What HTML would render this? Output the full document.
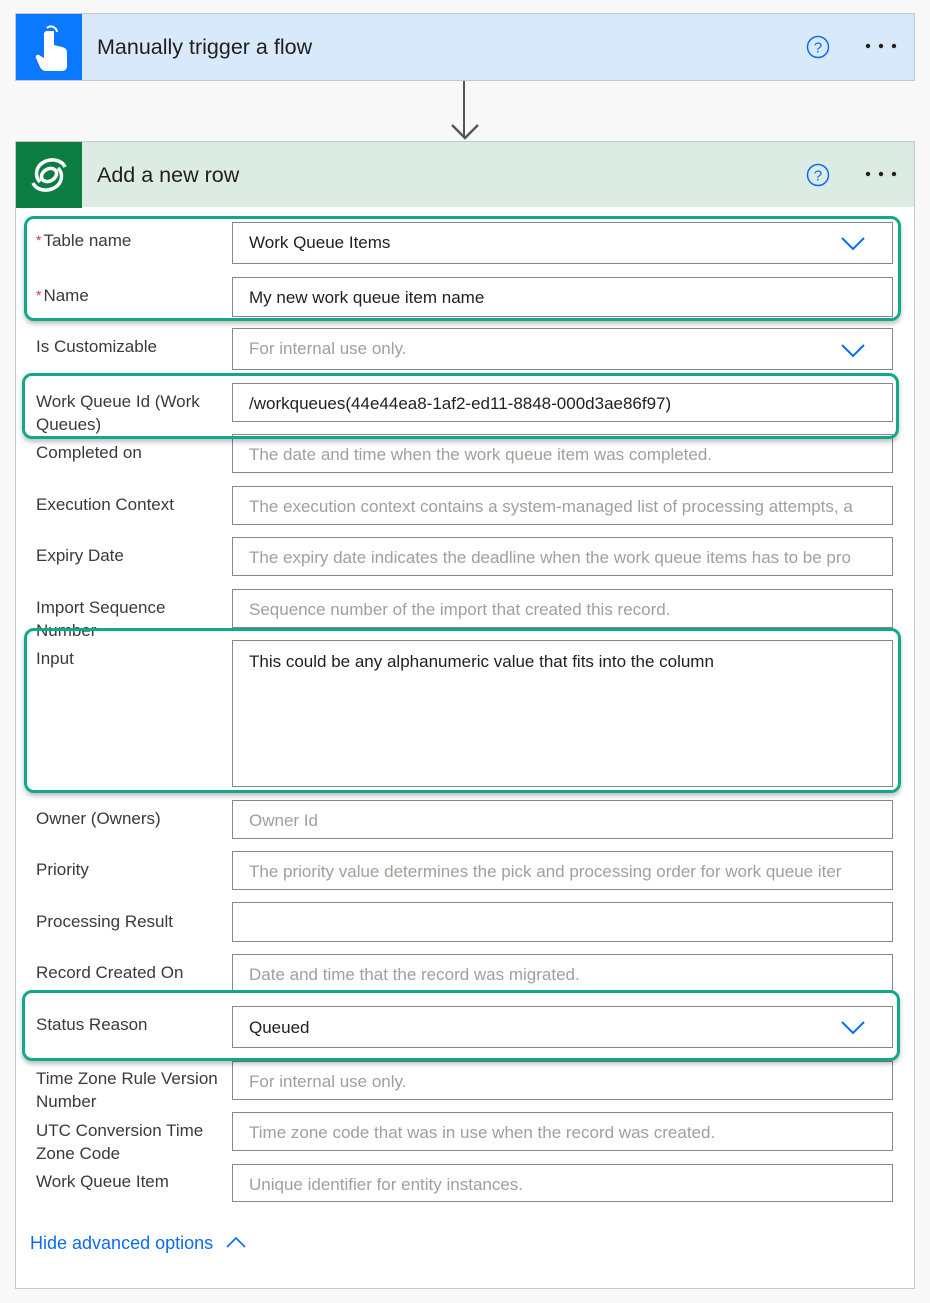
<!DOCTYPE html>
<html><head><meta charset="utf-8"><style>
body{margin:0;width:930px;height:1303px;background:#f8f8f8;font-family:"Liberation Sans",sans-serif;position:relative;overflow:hidden}
.a{position:absolute}
.card{position:absolute;border:1px solid #c8c8c8;box-sizing:border-box}
.lbl{position:absolute;left:36px;width:190px;font-size:17px;line-height:23px;color:#3b3a39}
.inp{position:absolute;left:232px;width:661px;border:1px solid #8a8886;box-sizing:border-box;background:#fff;font-size:17px;color:#201f1e;padding-left:16px;white-space:nowrap;overflow:hidden}
.ph{color:#a19f9d}
.hl{position:absolute;border:3px solid #12a98a;border-radius:10px;box-shadow:0 3px 5px rgba(0,0,0,.25);box-sizing:border-box}
.req{color:#d13438;font-size:14px;vertical-align:top;margin-right:2px}
</style></head><body>
<div class="card" style="left:15px;top:13px;width:900px;height:68px;background:#d9e9fc"></div>
<div class="a" style="left:16px;top:14px;width:66px;height:66px;background:#0a78ff">
<svg width="66" height="66" viewBox="0 0 66 66"><path d="M31 14a6 6 0 0 1 10 4" fill="none" stroke="#fff" stroke-width="2"/><path d="M33 17h5v14l8 2c4 1 5 3 5 6v13c0 3-2 5-5 5H30c-3 0-5-2-6-4l-4-9c-1-2 1-4 3-3l5 3V20c0-2 2-3 3-3z" fill="#fff"/></svg></div>
<div class="a" style="left:97px;top:35px;font-size:21.5px;color:#201f1e">Manually trigger a flow</div>
<svg class="a" style="left:806px;top:35px" width="24" height="24"><circle cx="12" cy="12" r="10.5" fill="none" stroke="#0a6cf5" stroke-width="1.5"/><text x="12" y="17.5" text-anchor="middle" font-size="15" fill="#0a6cf5" font-family="Liberation Sans">?</text></svg>
<svg class="a" style="left:864px;top:41px" width="34" height="10"><circle cx="4" cy="5" r="2.2" fill="#201f1e"/><circle cx="17" cy="5" r="2.2" fill="#201f1e"/><circle cx="30" cy="5" r="2.2" fill="#201f1e"/></svg>
<div class="a" style="left:463px;top:81px;width:2px;height:56px;background:#555"></div>
<svg class="a" style="left:449px;top:112px" width="32" height="30"><path d="M3 13l13 13 13-13" fill="none" stroke="#555" stroke-width="2.4"/></svg>

<div class="card" style="left:15px;top:141px;width:900px;height:1148px;background:#fff"></div>
<div class="a" style="left:16px;top:142px;width:898px;height:65px;background:#dcebe3"></div>
<div class="a" style="left:16px;top:142px;width:66px;height:66px;background:#0b7d43">
<svg width="66" height="66" viewBox="0 0 66 66"><g fill="none" stroke="#fff" stroke-width="3.5"><path d="M24 40c-6-6-4-16 4-20s18-2 21 5"/><path d="M42 26c6 6 4 16-4 20s-18 2-21-5"/><ellipse cx="33" cy="33" rx="8" ry="6" transform="rotate(-30 33 33)"/></g></svg></div>
<div class="a" style="left:97px;top:163px;font-size:21.5px;color:#201f1e">Add a new row</div>
<svg class="a" style="left:806px;top:163px" width="24" height="24"><circle cx="12" cy="12" r="10.5" fill="none" stroke="#0a6cf5" stroke-width="1.5"/><text x="12" y="17.5" text-anchor="middle" font-size="15" fill="#0a6cf5" font-family="Liberation Sans">?</text></svg>
<svg class="a" style="left:864px;top:169px" width="34" height="10"><circle cx="4" cy="5" r="2.2" fill="#201f1e"/><circle cx="17" cy="5" r="2.2" fill="#201f1e"/><circle cx="30" cy="5" r="2.2" fill="#201f1e"/></svg>

<div class="lbl" style="top:229px"><span class="req">*</span>Table name</div>
<div class="inp" style="top:222px;height:42px;line-height:40px">Work Queue Items</div>
<div class="lbl" style="top:284px"><span class="req">*</span>Name</div>
<div class="inp" style="top:277px;height:40px;line-height:40px">My new work queue item name</div>
<div class="lbl" style="top:335px">Is Customizable</div>
<div class="inp ph" style="top:328px;height:42px;line-height:40px">For internal use only.</div>
<div class="lbl" style="top:390px">Work Queue Id (Work Queues)</div>
<div class="inp" style="top:383px;height:39px;line-height:39px">/workqueues(44e44ea8-1af2-ed11-8848-000d3ae86f97)</div>
<div class="lbl" style="top:441px">Completed on</div>
<div class="inp ph" style="top:434px;height:39px;line-height:40px">The date and time when the work queue item was completed.</div>
<div class="lbl" style="top:493px">Execution Context</div>
<div class="inp ph" style="top:486px;height:39px;line-height:40px">The execution context contains a system-managed list of processing attempts, a</div>
<div class="lbl" style="top:544px">Expiry Date</div>
<div class="inp ph" style="top:537px;height:39px;line-height:40px">The expiry date indicates the deadline when the work queue items has to be pro</div>
<div class="lbl" style="top:596px">Import Sequence Number</div>
<div class="inp ph" style="top:589px;height:39px;line-height:40px">Sequence number of the import that created this record.</div>
<div class="lbl" style="top:647px;background:#fff">Input</div>
<div class="inp" style="top:640px;height:147px;line-height:42px">This could be any alphanumeric value that fits into the column</div>
<div class="lbl" style="top:807px">Owner (Owners)</div>
<div class="inp ph" style="top:800px;height:39px;line-height:40px">Owner Id</div>
<div class="lbl" style="top:858px">Priority</div>
<div class="inp ph" style="top:851px;height:39px;line-height:40px">The priority value determines the pick and processing order for work queue iter</div>
<div class="lbl" style="top:910px">Processing Result</div>
<div class="inp" style="top:902px;height:40px"></div>
<div class="lbl" style="top:961px">Record Created On</div>
<div class="inp ph" style="top:954px;height:39px;line-height:40px">Date and time that the record was migrated.</div>
<div class="lbl" style="top:1013px">Status Reason</div>
<div class="inp" style="top:1006px;height:42px;line-height:42px">Queued</div>
<div class="lbl" style="top:1067px">Time Zone Rule Version Number</div>
<div class="inp ph" style="top:1061px;height:39px;line-height:40px">For internal use only.</div>
<div class="lbl" style="top:1119px">UTC Conversion Time Zone Code</div>
<div class="inp ph" style="top:1112px;height:39px;line-height:40px">Time zone code that was in use when the record was created.</div>
<div class="lbl" style="top:1170px">Work Queue Item</div>
<div class="inp ph" style="top:1164px;height:38px;line-height:39px">Unique identifier for entity instances.</div>

<svg class="a" style="left:840px;top:235px" width="26" height="16"><path d="M2 3l11 11 11-11" fill="none" stroke="#0a6cf5" stroke-width="2"/></svg>
<svg class="a" style="left:840px;top:342px" width="26" height="16"><path d="M2 3l11 11 11-11" fill="none" stroke="#0a6cf5" stroke-width="2"/></svg>
<svg class="a" style="left:840px;top:1019px" width="26" height="16"><path d="M2 3l11 11 11-11" fill="none" stroke="#0a6cf5" stroke-width="2"/></svg>

<div class="hl" style="left:24px;top:216px;width:877px;height:105px"></div>
<div class="hl" style="left:22px;top:373px;width:877px;height:66px"></div>
<div class="hl" style="left:24px;top:628px;width:877px;height:165px"></div>
<div class="hl" style="left:22px;top:990px;width:878px;height:71px"></div>

<div class="a" style="left:30px;top:1233px;font-size:18px;color:#0a6cf5">Hide advanced options</div>
<svg class="a" style="left:225px;top:1235px" width="22" height="14"><path d="M2 12l9-9 9 9" fill="none" stroke="#0a6cf5" stroke-width="1.6"/></svg>
</body></html>
